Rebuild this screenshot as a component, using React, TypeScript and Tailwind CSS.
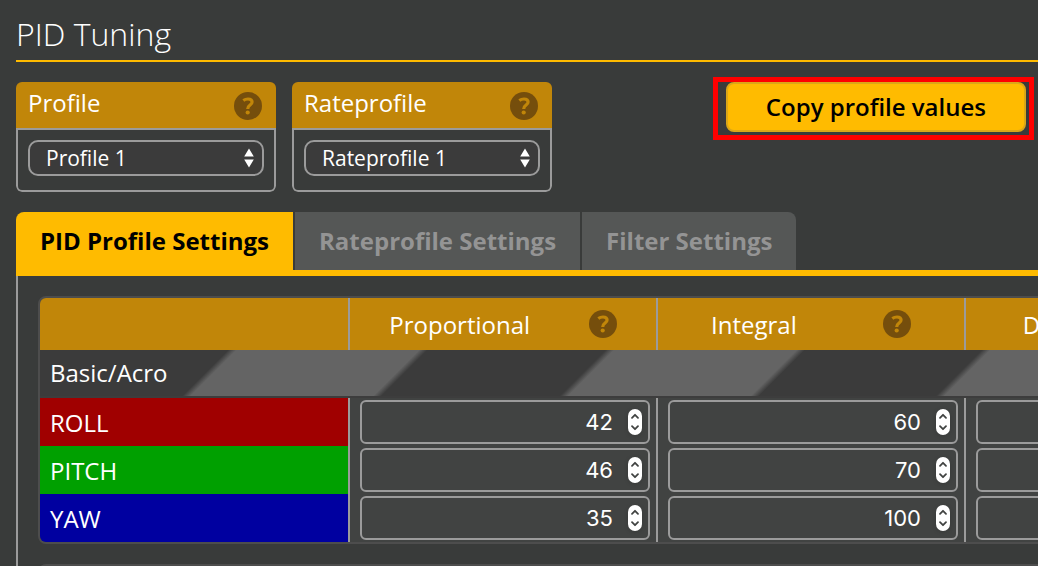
import { useState } from "react";

type Term = "proportional" | "integral" | "dmax";

const columns: { key: Term; label: string }[] = [
  { key: "proportional", label: "Proportional" },
  { key: "integral", label: "Integral" },
  { key: "dmax", label: "D Max" },
];

const axes: { name: string; color: string; values: Record<Term, string> }[] = [
  { name: "ROLL", color: "bg-[#a00000]", values: { proportional: "42", integral: "60", dmax: "" } },
  { name: "PITCH", color: "bg-[#00a000]", values: { proportional: "46", integral: "70", dmax: "" } },
  { name: "YAW", color: "bg-[#0000a0]", values: { proportional: "35", integral: "100", dmax: "" } },
];

const tabs = ["PID Profile Settings", "Rateprofile Settings", "Filter Settings"];

function HelpIcon() {
  return (
    <svg className="size-7 shrink-0" viewBox="0 0 28 28" role="img" aria-label="Help">
      <circle cx="14" cy="14" r="14" fill="#754e0c" />
      <path
        d="M9.3 8.5C10.700 7.500 12.300 7 14 7C16.600 7 18.100 8.200 18.100 10.100C18.100 13.200 13.700 13 13.700 16.900"
        fill="none"
        stroke="#c18609"
        strokeWidth="3.200"
      />
      <circle cx="13.700" cy="20.500" r="2.100" fill="#c18609" />
    </svg>
  );
}

function ProfileCard({ id, title, options }: { id: string; title: string; options: string[] }) {
  return (
    <section className="w-[260px] overflow-hidden rounded-md">
      <div className="flex h-[46px] items-center justify-between bg-[#c18609] pt-0.5 pr-3.5 pl-3">
        <label htmlFor={id} className="pb-1.5 text-2xl leading-8">
          {title}
        </label>
        <HelpIcon />
      </div>
      <div className="rounded-b-md border-2 border-[#9b9b9b] px-2.5 pt-2.5 pb-3.5">
        <div className="relative">
          <select
            id={id}
            className="block h-9 w-full appearance-none rounded-[10px] border-2 border-[#9b9b9b] bg-[#3b3b3b] pl-4 text-[21px] leading-8 text-white"
          >
            {options.map((option) => (
              <option key={option}>{option}</option>
            ))}
          </select>
          <svg
            className="pointer-events-none absolute top-2 right-2.5 h-5 w-2.5"
            viewBox="0 0 10 20"
            fill="#fff"
            aria-hidden="true"
          >
            <path d="M5 .5L9.8 8.5H.2ZM5 19.500L9.8 11.500H.2Z" />
          </svg>
        </div>
      </div>
    </section>
  );
}

function NumberField({ label, initial }: { label: string; initial: string }) {
  const [value, setValue] = useState(initial);
  return (
    <div className="flex h-11 items-center gap-[15px] rounded-md border-2 border-[#9b9b9b] pr-1.5">
      <input
        type="number"
        aria-label={label}
        value={value}
        onChange={(event) => setValue(event.target.value)}
        className="min-w-0 flex-1 appearance-none bg-transparent text-right font-[Inter,sans-serif] text-[22px] leading-8 text-white outline-none [-moz-appearance:textfield] [&::-webkit-inner-spin-button]:appearance-none"
      />
      <svg className="h-[26px] w-3.5 shrink-0 drop-shadow-sm" viewBox="0 0 14 26" aria-hidden="true">
        <rect width="14" height="26" rx="7" fill="#fff" />
        <path
          d="M4 8.800L7 5.800L10 8.800M4 17.200L7 20.200L10 17.200"
          fill="none"
          stroke="#414342"
          strokeWidth="1.800"
          strokeLinecap="round"
          strokeLinejoin="round"
        />
      </svg>
    </div>
  );
}

export default function App() {
  const [active, setActive] = useState(0);
  return (
    <main className="h-screen overflow-hidden bg-[#393b3a] pl-4 font-['Open_Sans',sans-serif] text-white">
      <h1 className="border-b-2 border-[#ffbb00] pt-3 pb-1 text-[32px] leading-[44px] font-light">PID Tuning</h1>

      <div className="mt-5 flex items-start justify-between pr-3">
        <div className="flex gap-4">
          <ProfileCard id="profile" title="Profile" options={["Profile 1", "Profile 2", "Profile 3"]} />
          <ProfileCard
            id="rateprofile"
            title="Rateprofile"
            options={["Rateprofile 1", "Rateprofile 2", "Rateprofile 3"]}
          />
        </div>
        <div className="relative">
          <button
            type="button"
            className="block h-[50px] rounded-lg border-2 border-[#dba718] bg-[#ffbb00] px-[38px] text-2xl leading-8 font-semibold text-black"
          >
            Copy profile values
          </button>
          <div className="pointer-events-none absolute -top-[5px] -right-2 -bottom-2 -left-[13px] border-5 border-[#ff0000]" />
        </div>
      </div>

      <div role="tablist" className="mt-5 flex gap-0.5 border-b-6 border-[#ffbb00]">
        {tabs.map((tab, index) => (
          <button
            key={tab}
            type="button"
            role="tab"
            aria-selected={index === active}
            onClick={() => setActive(index)}
            className={`h-[58px] px-6 text-2xl leading-8 font-bold whitespace-nowrap first:rounded-tl-lg last:rounded-tr-lg ${
              index === active ? "bg-[#ffbb00] text-black" : "bg-[#555756] text-[#949494]"
            }`}
          >
            {tab}
          </button>
        ))}
      </div>

      <div className="flex flex-col items-start gap-5 border-l-2 border-[#9b9b9b] p-5">
        <div className="overflow-hidden rounded-lg border-2 border-[#4d4d4d] bg-[#414342]">
          <table className="w-[1232px] table-fixed border-separate border-spacing-0 text-left text-2xl leading-8">
            <colgroup>
              <col className="w-1/4" />
              {columns.map((column) => (
                <col key={column.key} className="w-1/4" />
              ))}
            </colgroup>
            <thead>
              <tr className="h-[52px] bg-[#c18609]">
                <td className="p-0" />
                {columns.map((column) => (
                  <th key={column.key} scope="col" className="border-l-2 border-[#9b9b9b] px-2.5 py-0 font-normal">
                    <div className="flex items-center justify-around">
                      <span className="pt-0.5">{column.label}</span>
                      <HelpIcon />
                    </div>
                  </th>
                ))}
              </tr>
            </thead>
            <tbody>
              <tr>
                <th
                  scope="colgroup"
                  colSpan={4}
                  className="h-12 border-b-2 border-[#3d3d3d] bg-[linear-gradient(135deg,#3b3b3b_133px,#646464_139px,#646464_268px,#3b3b3b_274px,#3b3b3b_400px,#646464_406px,#646464_535px,#3b3b3b_541px,#3b3b3b_666px,#646464_672px)] px-2.5 py-0 font-normal"
                >
                  Basic/Acro
                </th>
              </tr>
              {axes.map((axis) => (
                <tr key={axis.name} className="h-12">
                  <th scope="row" className={`px-2.5 pt-0.5 pb-0 font-normal ${axis.color}`}>
                    {axis.name}
                  </th>
                  {columns.map((column) => (
                    <td key={column.key} className="border-l-2 border-[#9b9b9b] py-0.5 pr-1.5 pl-2.5">
                      <NumberField label={`${axis.name} ${column.label}`} initial={axis.values[column.key]} />
                    </td>
                  ))}
                </tr>
              ))}
            </tbody>
          </table>
        </div>
        <div className="h-32 w-[1236px] rounded-lg border-2 border-[#4d4d4d] bg-[#414342]" />
      </div>
    </main>
  );
}
